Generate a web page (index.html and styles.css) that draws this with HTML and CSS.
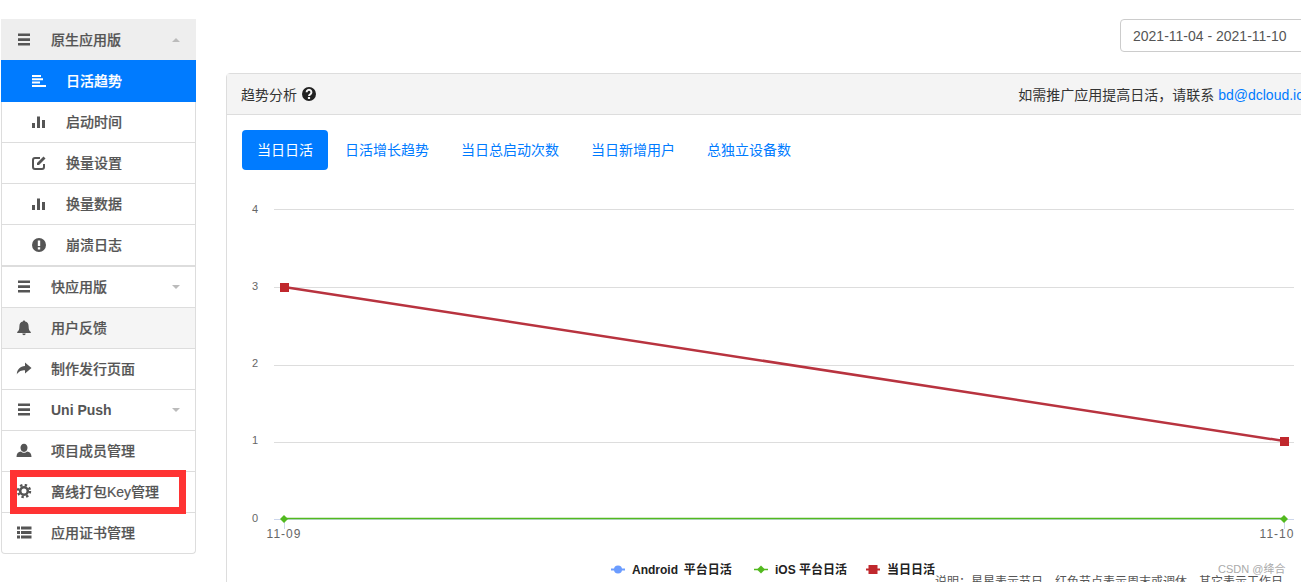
FILE: index.html
```html
<!DOCTYPE html>
<html lang="en">
<head>
  <meta charset="UTF-8">
  <meta name="viewport" content="width=device-width, initial-scale=1.0">
  <title>趋势分析</title>
  <link rel="stylesheet" href="styles.css">
</head>
<body>

  <!-- Icon set -->
  <svg class="icon-defs" xmlns="http://www.w3.org/2000/svg">
    <symbol id="i-bars" viewBox="0 0 16 16"><path d="M2 1.500h12v2.600H2zM2 6.300h12v2.600H2zM2 11h12v2.600H2z"/></symbol>
    <symbol id="i-align" viewBox="0 0 16 16"><path d="M1 2h9v2H1zM1 5.300h11v2H1zM1 8.600h8v2H1zM1 11.900h14v2H1z"/></symbol>
    <symbol id="i-chart" viewBox="0 0 16 16"><path d="M1 9h3v5H1zM6 2.500h3V14H6zM11 6h3v8h-3z"/></symbol>
    <symbol id="i-edit" viewBox="0 0 16 16"><path fill="none" stroke="currentColor" stroke-width="2" d="M9 3H4a2 2 0 0 0-2 2v7a2 2 0 0 0 2 2h7a2 2 0 0 0 2-2V9"/><path d="M6 8l6.500-6.500 2 2L8 10H6z"/></symbol>
    <symbol id="i-alert" viewBox="0 0 16 16"><path fill-rule="evenodd" d="M8 1a7 7 0 1 0 0 14A7 7 0 0 0 8 1zM6.800 3.500h2.400V9H6.800zM6.800 10.200h2.400v2.300H6.800z"/></symbol>
    <symbol id="i-bell" viewBox="0 0 16 16"><path d="M8 .6c.7 0 1.100.4 1.100 1 2.300.4 3.500 2.200 3.500 4.700 0 3.200.7 4.600 2.200 5.700v1H1.200v-1c1.500-1.100 2.200-2.500 2.200-5.700 0-2.500 1.200-4.300 3.500-4.700 0-.6.400-1 1.100-1zM6.300 13.600h3.400a1.700 1.700 0 0 1-3.400 0z"/></symbol>
    <symbol id="i-share" viewBox="0 0 16 16"><path d="M9 1.500l6.500 5.500L9 12.500V9.200C5.500 9.200 2.800 10 .8 13.500c.1-5 3.400-8.300 8.200-8.500z"/></symbol>
    <symbol id="i-user" viewBox="0 0 16 16"><path d="M8 .8c2.200 0 3.500 1.800 3.500 4S10.200 9 8 9 4.500 7 4.500 4.800 5.800.8 8 .8zM5 8.500c.8.900 1.800 1.300 3 1.300s2.200-.4 3-1.300c2.900.4 4.500 2 4.500 5.500H.5c0-3.500 1.600-5.100 4.500-5.500z"/></symbol>
    <symbol id="i-cog" viewBox="0 0 16 16"><circle cx="8" cy="7" r="3.800" fill="none" stroke="currentColor" stroke-width="2.600"/><circle cx="8" cy="7" r="6" fill="none" stroke="currentColor" stroke-width="2.400" stroke-dasharray="2.360 2.350"/></symbol>
    <symbol id="i-list" viewBox="0 0 16 16"><path d="M1 1.500h3v3H1zM5 1.500h10.500v3H5zM1 6h3v3H1zM5 6h10.500v3H5zM1 10.500h3v3H1zM5 10.500h10.500v3H5z"/></symbol>
    <symbol id="i-help" viewBox="0 0 16 16"><path fill-rule="evenodd" d="M8 1a7 7 0 1 0 0 14A7 7 0 0 0 8 1zM6.900 11h2.200v2.100H6.900z"/><path fill="none" stroke="#f4f4f4" stroke-width="2" d="M5.600 6.200a2.400 2.400 0 1 1 3.600 2.100c-.8.500-1.200.8-1.200 1.800"/></symbol>
  </svg>

  <div class="page">
    <!-- Sidebar -->
    <nav class="sidebar">
      <div class="nav-group">
        <a class="nav-item nav-open"><svg class="icon"><use href="#i-bars"/></svg><span>原生应用版</span><i class="caret caret-up"></i></a>
        <a class="nav-sub nav-active"><svg class="icon"><use href="#i-align"/></svg><span>日活趋势</span></a>
        <a class="nav-sub"><svg class="icon"><use href="#i-chart"/></svg><span>启动时间</span></a>
        <a class="nav-sub"><svg class="icon"><use href="#i-edit"/></svg><span>换量设置</span></a>
        <a class="nav-sub"><svg class="icon"><use href="#i-chart"/></svg><span>换量数据</span></a>
        <a class="nav-sub"><svg class="icon"><use href="#i-alert"/></svg><span>崩溃日志</span></a>
      </div>
      <a class="nav-item"><svg class="icon"><use href="#i-bars"/></svg><span>快应用版</span><i class="caret"></i></a>
      <a class="nav-item nav-hover"><svg class="icon"><use href="#i-bell"/></svg><span>用户反馈</span></a>
      <a class="nav-item"><svg class="icon"><use href="#i-share"/></svg><span>制作发行页面</span></a>
      <a class="nav-item"><svg class="icon"><use href="#i-bars"/></svg><span class="nav-latin">Uni Push</span><i class="caret"></i></a>
      <a class="nav-item"><svg class="icon"><use href="#i-user"/></svg><span>项目成员管理</span></a>
      <a class="nav-item"><svg class="icon"><use href="#i-cog"/></svg><span>离线打包Key管理</span></a>
      <a class="nav-item nav-last"><svg class="icon"><use href="#i-list"/></svg><span>应用证书管理</span></a>
      <div class="highlight-box"></div>
    </nav>

    <main class="content">
      <div class="toolbar">
        <input class="date-range" value="2021-11-04 - 2021-11-10">
      </div>

      <section class="panel">
        <header class="panel-head">
          <div class="panel-title">趋势分析 <svg class="help-icon"><use href="#i-help"/></svg></div>
          <div class="panel-note">如需推广应用提高日活，请联系 <a>bd@dcloud.io</a></div>
        </header>

        <div class="tabs">
          <a class="tab tab-active">当日日活</a>
          <a class="tab">日活增长趋势</a>
          <a class="tab">当日总启动次数</a>
          <a class="tab">当日新增用户</a>
          <a class="tab">总独立设备数</a>
        </div>

        <!-- Chart, viewBox uses page coordinates -->
        <svg class="chart" viewBox="227 170 1098 420" width="1098" height="420">
          <g class="grid">
            <path d="M274 209.500H1294M274 287.500H1294M274 365.500H1294M274 442.500H1294"/>
          </g>
          <path class="axis" d="M274 519.500H1294M284.500 519V529M1284.500 519V529"/>

          <g class="tick-y">
            <text x="255" y="213">4</text>
            <text x="255" y="290">3</text>
            <text x="255" y="367">2</text>
            <text x="255" y="444">1</text>
            <text x="255" y="522">0</text>
          </g>
          <g class="tick-x">
            <text x="284" y="538">11-09</text>
            <text x="1277" y="538">11-10</text>
          </g>

          <path class="line-ios" d="M284 518.500H1284"/>
          <path class="dot-ios" d="M284 515l4 4-4 4-4-4zM1284 515l4 4-4 4-4-4z"/>
          <path class="line-day" d="M284 287L1284 441"/>
          <path class="dot-day" d="M280 283h9v9h-9zM1280 437h9v9h-9z"/>

          <g class="legend">
            <path class="legend-android" d="M611 569.500h14"/>
            <circle class="dot-android" cx="618" cy="569.500" r="4"/>
            <text class="legend-wide" x="632" y="574">Android 平台日活</text>
            <path class="line-ios" d="M754 569.500h14"/>
            <path class="dot-ios" d="M761 565.500l4 4-4 4-4-4z"/>
            <text x="775" y="574">iOS 平台日活</text>
            <path class="legend-day" d="M866 569.500h14"/>
            <path class="dot-day" d="M868.500 565h9v9h-9z"/>
            <text x="887" y="574">当日日活</text>
          </g>

          <text class="chart-note" x="935" y="586">说明：星星表示节日，红色节点表示周末或调休，其它表示工作日</text>
        </svg>
      </section>
    </main>
  </div>

  <div class="watermark">CSDN @绛合</div>

</body>
</html>
```

FILE: styles.css
```css
* {
  box-sizing: border-box;
}
html, body {
  height: 100%;
}
body {
  margin: 0;
  overflow: hidden;
  background: #fff;
  color: #555;
  font-family: "Liberation Sans", "Noto Sans CJK SC", sans-serif;
  font-size: 14px;
}
a {
  text-decoration: none;
}
.icon-defs {
  display: none;
}
.page {
  display: flex;
  align-items: flex-start;
  width: 1326px;
  padding-left: 1px;
}

/* Sidebar */
.sidebar {
  flex: none;
  position: relative;
  width: 195px;
  margin-top: 19px;
  border: 1px solid #ddd;
  border-top: 0;
  border-radius: 0 0 4px 4px;
}
.nav-group {
  margin: 0 -1px;
  border-bottom: 1px solid #ddd;
}
.nav-item, .nav-sub {
  display: flex;
  align-items: center;
  gap: 19px;
  height: 41px;
  padding-left: 14px;
  border-bottom: 1px solid #ddd;
  color: #555;
  font-weight: 500;
  -webkit-text-stroke: 0.2px;
}
.nav-item span, .nav-sub span {
  margin-bottom: 2px;
}
.nav-item .nav-latin {
  margin-bottom: 0;
  font-weight: 700;
  -webkit-text-stroke: 0;
}
.nav-last {
  height: 40px;
  border-bottom: 0;
}
.nav-sub {
  margin: 0 1px;
  padding-left: 29px;
}
.nav-group .nav-item {
  padding-left: 15px;
  background: #eee;
  border-bottom: 0;
}
.nav-active {
  height: 42px;
  margin: 0;
  padding-left: 30px;
  background: #007bff;
  color: #fff;
  border-bottom: 0;
}
.nav-hover {
  background: #f5f5f5;
}
.icon {
  flex: none;
  width: 16px;
  height: 16px;
  fill: currentColor;
}
.caret {
  width: 0;
  height: 0;
  margin-left: auto;
  margin-right: 15px;
  border-left: 4px solid transparent;
  border-right: 4px solid transparent;
  border-top: 4px solid #bbb;
}
.caret-up {
  margin-right: 16px;
  border-top: 0;
  border-bottom: 4px solid #bbb;
}
.highlight-box {
  position: absolute;
  left: 8px;
  top: 451px;
  width: 176px;
  height: 44px;
  border: 7px solid #f33;
}

/* Main */
.content {
  flex: none;
  width: 1100px;
  margin-left: 30px;
  padding-top: 19px;
}
.toolbar {
  display: flex;
  justify-content: flex-end;
  margin-bottom: 21px;
}
.date-range {
  width: 206px;
  height: 33px;
  padding: 0 12px;
  border: 1px solid #ccc;
  border-radius: 4px;
  color: #555;
  font: 14px "Liberation Sans", sans-serif;
}
.panel {
  border: 1px solid #ddd;
  border-radius: 4px;
}
.panel-head {
  display: flex;
  justify-content: space-between;
  align-items: center;
  height: 41px;
  padding: 0 21px 0 14px;
  background: #f4f4f4;
  border-bottom: 1px solid #ddd;
  color: #333;
}
.panel-title {
  display: flex;
  align-items: center;
  gap: 4px;
}
.help-icon {
  width: 16px;
  height: 16px;
  fill: #222;
}
.panel-note a {
  color: #007bff;
}
.tabs {
  display: flex;
  gap: 2px;
  padding: 15px 15px 0;
}
.tab {
  height: 40px;
  padding: 0 15px;
  line-height: 40px;
  border-radius: 4px;
  color: #007bff;
}
.tab-active {
  background: #007bff;
  color: #fff;
}

/* Chart */
.chart {
  display: block;
}
.chart text {
  font-family: "Liberation Sans", "Noto Sans CJK SC", sans-serif;
}
.grid path {
  stroke: #ddd;
  fill: none;
}
.axis {
  stroke: #ccd6eb;
  fill: none;
}
.tick-y text, .tick-x text {
  fill: #666;
  font-size: 11px;
  text-anchor: middle;
}
.tick-x text {
  font-size: 12px;
  letter-spacing: 1px;
}
.line-ios {
  stroke: #52b91f;
  stroke-width: 1.500;
  fill: none;
}
.dot-ios {
  fill: #52b91f;
}
.line-day {
  stroke: #b8333f;
  stroke-width: 2.500;
  fill: none;
}
.legend-day {
  stroke: #c0282d;
  stroke-width: 2;
}
.dot-day {
  fill: #c0282d;
}
.legend-android {
  stroke: #6b9cff;
  stroke-width: 2;
}
.dot-android {
  fill: #6b9cff;
}
.legend text {
  fill: #222;
  font-size: 12px;
  font-weight: 700;
}
.legend .legend-wide {
  word-spacing: 2.500px;
}
.chart-note {
  fill: #555;
  font-size: 12px;
}

.watermark {
  position: absolute;
  left: 1218px;
  top: 560px;
  color: #aaa;
  font-size: 11px;
  white-space: nowrap;
}
```
